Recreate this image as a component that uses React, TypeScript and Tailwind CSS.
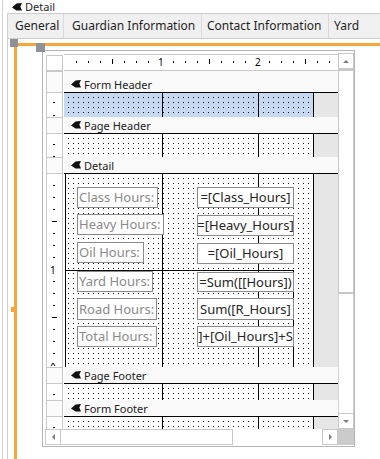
import React from "react";

// dotted design grid: one 1px dot per 5px tile
const DOTS =
  "bg-[image:conic-gradient(from_270deg_at_1px_1px,#111_90deg,transparent_0)] bg-[length:5px_5px] bg-[position:4px_4px]";

function SectionIcon() {
  return (
    <svg width="10" height="8" viewBox="0 0 10 8" className="shrink-0">
      <path d="M0 4.5L4.5 0.5L10 0L8.3 3.6L10 7.6H4.5Z" fill="#111" />
    </svg>
  );
}

function SectionBar({ title, tall }: { title: string; tall?: boolean }) {
  return (
    <div className={`flex shrink-0 ${tall ? "h-[22px]" : "h-[17px]"}`}>
      <div className="mx-[1px] w-[17px] border border-[#c8c8c8] bg-[#fbfbfb]" />
      <div className="flex flex-1 items-end border-b border-black bg-[#f9f9f9]">
        <div className="flex h-[16px] items-center gap-[3px] pl-[7px]">
          <SectionIcon />
          <span className="text-[11px] leading-none text-[#222]">{title}</span>
        </div>
      </div>
    </div>
  );
}

type Tick = { y: number; long?: boolean };

function SideTicks({ h, ticks, caret }: { h: number; ticks: Tick[]; caret?: number }) {
  return (
    <svg width="15" height={h} className="block">
      {ticks.map((t) => (
        <rect key={t.y} x={t.long ? 5 : 6} y={t.y} width={t.long ? 5 : 2} height={1} fill="#000" />
      ))}
      {caret !== undefined ? (
        <polyline points={`4,${caret + 2} 6,${caret - 1} 8,${caret + 2}`} fill="none" stroke="#000" strokeWidth="1" />
      ) : null}
    </svg>
  );
}

function SectionBody({
  hCls,
  h,
  ticks,
  bg,
  one,
  caret,
  children,
}: {
  hCls: string;
  h: number;
  ticks: Tick[];
  bg: string;
  one?: boolean;
  caret?: number;
  children?: React.ReactNode;
}) {
  return (
    <div className={`flex shrink-0 ${hCls}`}>
      <div className="relative mx-[1px] w-[17px] border-x border-[#c8c8c8] bg-white">
        <SideTicks h={h} ticks={ticks} caret={caret} />
        {one ? (
          <span className="absolute left-[3px] top-[90px] text-[10px] leading-[12px] text-black">1</span>
        ) : null}
      </div>
      <div className={`relative flex flex-1 ${DOTS} ${bg}`}>
        <div className="w-[99px] border-r border-black" />
        <div className="w-[96px] border-r border-black" />
        <div className="w-[55px] border-r border-black" />
        <div className="flex-1 bg-[#e6e6e6]" />
        {children}
      </div>
    </div>
  );
}

function TopRuler() {
  const marks: React.ReactNode[] = [];
  for (let k = 1; k <= 22; k++) {
    if (k % 8 === 0) continue;
    const x = Math.floor(0.5 + 12.06 * k);
    if (k % 4 === 0) marks.push(<rect key={k} x={x} y={4} width={1} height={5} fill="#000" />);
    else marks.push(<rect key={k} x={x} y={6} width={1} height={2} fill="#000" />);
  }
  return (
    <div className="relative h-[15px]">
      <svg width="272" height="15" className="block">
        {marks}
      </svg>
      <span className="absolute left-[94px] top-[1px] text-[10px] leading-[12px] text-black">1</span>
      <span className="absolute left-[191px] top-[1px] text-[10px] leading-[12px] text-black">2</span>
    </div>
  );
}

function Arrow({ dir }: { dir: "up" | "down" | "left" | "right" }) {
  const pts = {
    up: "0,3 3,0 6,3",
    down: "0,0 6,0 3,3",
    left: "3,0 3,6 0,3",
    right: "0,0 3,3 0,6",
  }[dir];
  const vertical = dir === "up" || dir === "down";
  return (
    <svg width={vertical ? 6 : 3} height={vertical ? 3 : 6}>
      <polygon points={pts} fill="#7a7a7a" />
    </svg>
  );
}

const labels = [
  { t: "Class Hours:", cls: "top-[13px] w-[81px] h-[21px]" },
  { t: "Heavy Hours:", cls: "top-[40px] w-[87px] h-[21px]" },
  { t: "Oil Hours:", cls: "top-[68px] w-[67px] h-[21px]" },
  { t: "Yard Hours:", cls: "top-[97px] w-[76px] h-[21px]" },
  { t: "Road Hours:", cls: "top-[124px] w-[80px] h-[22px]" },
  { t: "Total Hours:", cls: "top-[152px] w-[80px] h-[21px]" },
];

const boxes = [
  { t: "=[Class_Hours]", cls: "top-[13px] h-[21px]" },
  { t: "=[Heavy_Hours]", cls: "top-[41px] h-[21px]" },
  { t: "=[Oil_Hours]", cls: "top-[69px] h-[21px]" },
  { t: "=Sum([[Hours])", cls: "top-[98px] h-[20px]" },
  { t: "Sum([R_Hours]", cls: "top-[124px] h-[22px]" },
  { t: "]+[Oil_Hours]+S", cls: "top-[152px] h-[21px]" },
];

const detailTicks: Tick[] = [1, 2, 3, 4, 5, 6, 7, 9, 10, 11, 12, 13, 14, 15].map((k) => ({
  y: 12 * k - 1,
  long: k % 4 === 0,
}));

export default function App() {
  return (
    <div className="flex h-[459px] w-[380px] overflow-hidden bg-white pl-[2px] font-['Noto_Sans',sans-serif] text-[#1f1f1f]">
      <div className="flex flex-1 flex-col border-l border-[#d2d2d2]">
        <div className="flex h-[13px] shrink-0 items-center gap-[3px] pl-[9px]">
          <SectionIcon />
          <span className="text-[11px] leading-none">Detail</span>
        </div>

        <div className="ml-[4px] flex flex-1 flex-col border-l border-[#cfcfcf]">
          {/* tab strip */}
          <div className="flex h-[26px] shrink-0 border-y border-[#cdcdcd] bg-[#f0f0f0] text-[12px] leading-none whitespace-nowrap">
            <div className="flex w-[56px] items-center border-r border-[#d9d9d9] pl-[7px]">General</div>
            <div className="flex w-[138px] items-center border-r border-[#d9d9d9] pl-[8px]">Guardian Information</div>
            <div className="flex w-[127px] items-center border-r border-[#d9d9d9] pl-[5px]">Contact Information</div>
            <div className="flex items-center pl-[5px]">Yard</div>
          </div>

          {/* tab page */}
          <div className="relative flex-1">
            <div className="absolute left-[2px] top-0 size-[8px] bg-[#8e9196]" />
            <div className="absolute left-[10px] right-0 top-[4px] h-[3px] bg-[#f8a63c]" />
            <div className="absolute bottom-0 left-[6px] top-[8px] w-[3px] bg-[#f8a63c]" />
            <div className="absolute left-[3px] top-[268px] size-[5px] bg-[#f8a63c]" />
            <div className="absolute left-[28px] top-[4px] z-10 size-[9px] bg-[#8e9196]" />

            {/* subform control */}
            <div className="ml-[34px] mt-[11px] h-[397px] w-[313px] border border-[#b4b4b4] pb-[1px] pl-[2px] pt-[2px]">
              <div className="flex h-[392px] w-[309px]">
                <div className="flex w-[293px] flex-col">
                  {/* ruler row */}
                  <div className="flex h-[18px] shrink-0">
                    <div className="ml-[1px] mr-[1px] mt-[2px] h-[16px] w-[17px] border border-[#c8c8c8]" />
                    <div className="mt-[1px] h-[17px] flex-1 border-y border-[#c8c8c8] bg-white">
                      <TopRuler />
                    </div>
                  </div>

                  {/* sections */}
                  <div className="flex h-[358px] flex-col overflow-hidden">
                    <SectionBar title="Form Header" tall />
                    <SectionBody hCls="h-[24px]" h={24} ticks={[{ y: 9 }, { y: 22 }]} bg="bg-[#c6d9f0]" />
                    <SectionBar title="Page Header" />
                    <SectionBody hCls="h-[23px]" h={23} ticks={[{ y: 10 }, { y: 22 }]} bg="bg-white" />
                    <SectionBar title="Detail" />
                    <SectionBody hCls="h-[193px]" h={193} ticks={detailTicks} one caret={190} bg="bg-white">
                      <div className="absolute bottom-0 left-[1px] top-0 w-px bg-black" />
                      <div className="absolute left-[1px] top-[96px] h-px w-[229px] bg-black" />
                      <div className="absolute bottom-0 left-[229px] top-[96px] w-px bg-black" />
                      {labels.map((l) => (
                        <div
                          key={l.t}
                          className={`absolute left-[13px] flex items-center overflow-hidden whitespace-nowrap border border-[#8a8a8a] bg-white pl-[1px] text-[13px] leading-none text-[#8a8a8a] ${l.cls}`}
                        >
                          {l.t}
                        </div>
                      ))}
                      {boxes.map((b) => (
                        <div
                          key={b.t}
                          className={`absolute left-[133px] flex w-[97px] items-center justify-center overflow-hidden border border-[#8a8a8a] bg-white text-[13px] leading-none text-[#262626] ${b.cls}`}
                        >
                          <span className="whitespace-nowrap">{b.t}</span>
                        </div>
                      ))}
                    </SectionBody>
                    <SectionBar title="Page Footer" />
                    <SectionBody hCls="h-[16px]" h={16} ticks={[{ y: 10 }]} bg="bg-white" />
                    <SectionBar title="Form Footer" />
                    <SectionBody hCls="h-[24px]" h={24} ticks={[{ y: 10 }, { y: 22 }]} bg="bg-white" />
                  </div>

                  {/* horizontal scrollbar */}
                  <div className="flex h-[16px] shrink-0">
                    <div className="flex w-[16px] items-center justify-center border border-[#c8c8c8]">
                      <Arrow dir="left" />
                    </div>
                    <div className="w-[172px] border-y border-r border-[#c8c8c8] bg-white" />
                    <div className="flex-1" />
                    <div className="flex w-[16px] items-center justify-center border border-[#c8c8c8]">
                      <Arrow dir="right" />
                    </div>
                  </div>
                </div>

                {/* vertical scrollbar */}
                <div className="flex w-[16px] flex-col">
                  <div className="flex h-[16px] items-center justify-center border border-[#c8c8c8]">
                    <Arrow dir="up" />
                  </div>
                  <div className="h-[225px] border-x border-b-2 border-t-2 border-[#c8c8c8] bg-white" />
                  <div className="flex-1 border-x border-[#d4d4d4]" />
                  <div className="flex h-[16px] items-center justify-center border border-[#c8c8c8]">
                    <Arrow dir="down" />
                  </div>
                  <div className="h-[16px] bg-[#cbcbcb]" />
                </div>
              </div>
            </div>
          </div>
        </div>
      </div>
    </div>
  );
}
